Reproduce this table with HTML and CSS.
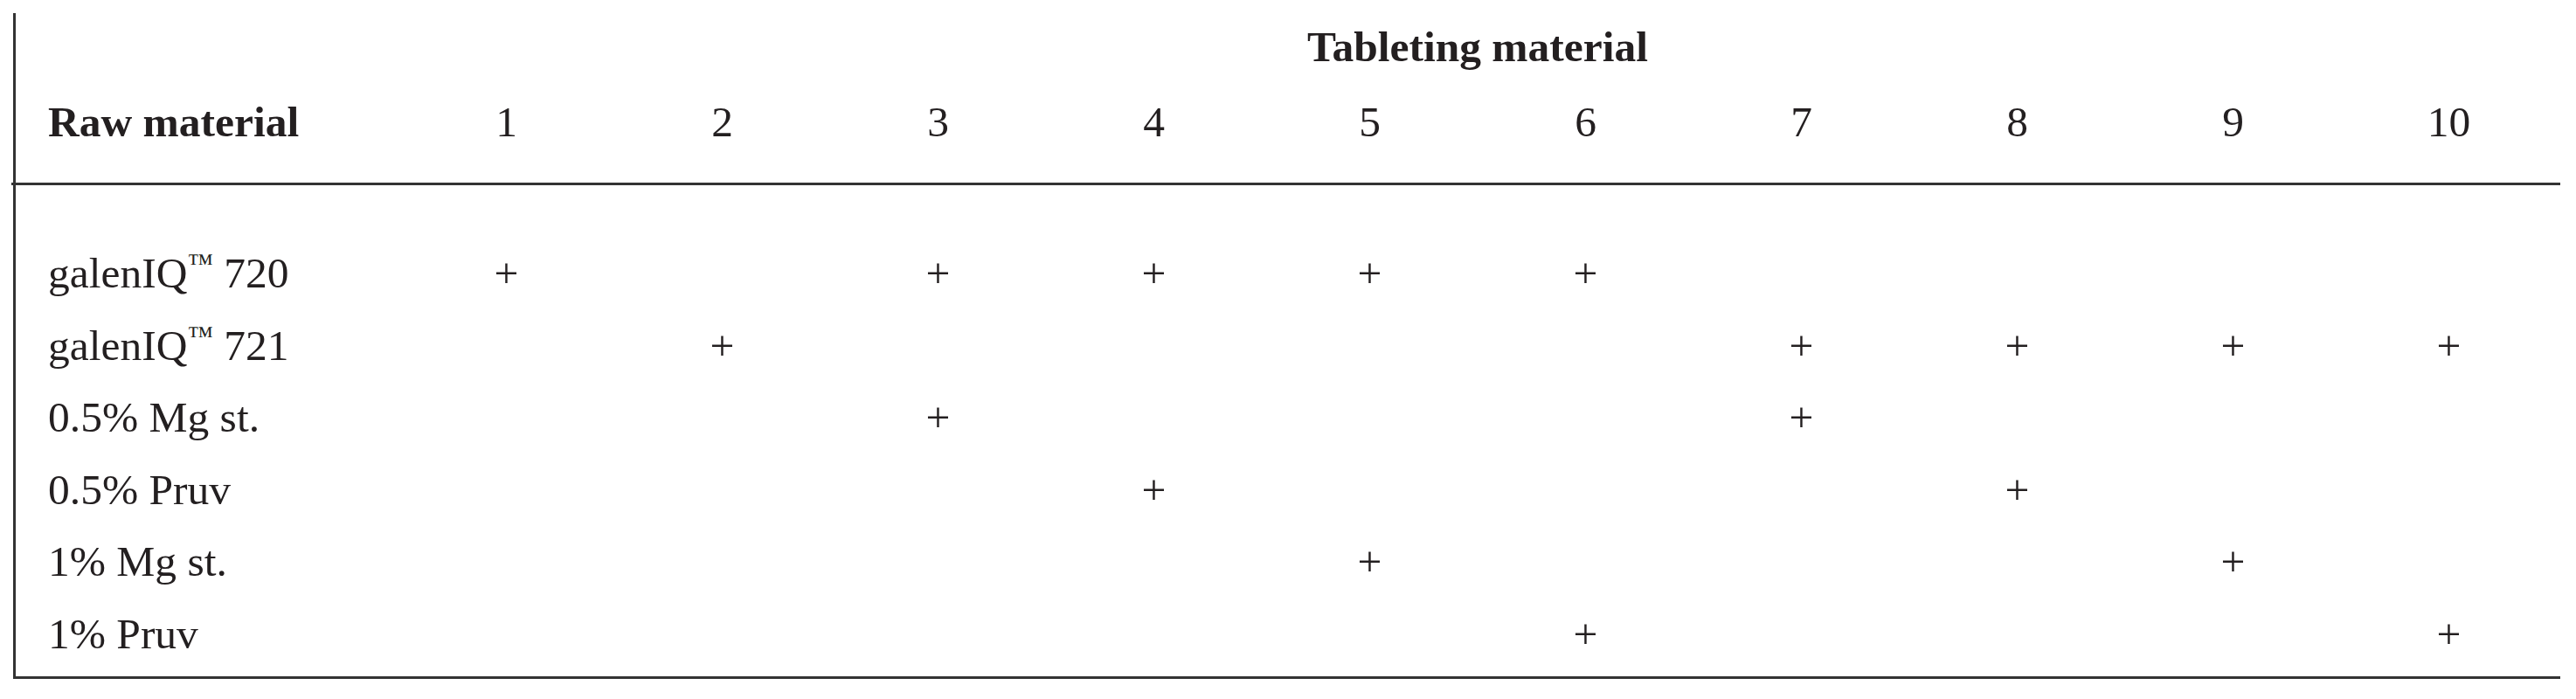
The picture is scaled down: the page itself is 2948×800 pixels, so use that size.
FILE: index.html
```html
<!DOCTYPE html>
<html lang="en">
<head>
<meta charset="utf-8">
<title>Tableting material</title>
<link rel="stylesheet" href="styles.css">
</head>
<body>
<div class="frame">
  <div class="head">
    <div class="grid title-row">
      <div class="title">Tableting material</div>
    </div>
    <div class="grid num-row">
      <div class="label bold">Raw material</div>
      <div class="cell">1</div><div class="cell">2</div><div class="cell">3</div><div class="cell">4</div><div class="cell">5</div>
      <div class="cell">6</div><div class="cell">7</div><div class="cell">8</div><div class="cell">9</div><div class="cell">10</div>
    </div>
  </div>
  <div class="body">
    <div class="grid row">
      <div class="label">galenIQ<span class="tm">™</span> 720</div>
      <div class="cell">+</div><div class="cell"></div><div class="cell">+</div><div class="cell">+</div><div class="cell">+</div>
      <div class="cell">+</div><div class="cell"></div><div class="cell"></div><div class="cell"></div><div class="cell"></div>
    </div>
    <div class="grid row">
      <div class="label">galenIQ<span class="tm">™</span> 721</div>
      <div class="cell"></div><div class="cell">+</div><div class="cell"></div><div class="cell"></div><div class="cell"></div>
      <div class="cell"></div><div class="cell">+</div><div class="cell">+</div><div class="cell">+</div><div class="cell">+</div>
    </div>
    <div class="grid row">
      <div class="label">0.5% Mg st.</div>
      <div class="cell"></div><div class="cell"></div><div class="cell">+</div><div class="cell"></div><div class="cell"></div>
      <div class="cell"></div><div class="cell">+</div><div class="cell"></div><div class="cell"></div><div class="cell"></div>
    </div>
    <div class="grid row">
      <div class="label">0.5% Pruv</div>
      <div class="cell"></div><div class="cell"></div><div class="cell"></div><div class="cell">+</div><div class="cell"></div>
      <div class="cell"></div><div class="cell"></div><div class="cell">+</div><div class="cell"></div><div class="cell"></div>
    </div>
    <div class="grid row">
      <div class="label">1% Mg st.</div>
      <div class="cell"></div><div class="cell"></div><div class="cell"></div><div class="cell"></div><div class="cell">+</div>
      <div class="cell"></div><div class="cell"></div><div class="cell"></div><div class="cell">+</div><div class="cell"></div>
    </div>
    <div class="grid row">
      <div class="label">1% Pruv</div>
      <div class="cell"></div><div class="cell"></div><div class="cell"></div><div class="cell"></div><div class="cell"></div>
      <div class="cell">+</div><div class="cell"></div><div class="cell"></div><div class="cell"></div><div class="cell">+</div>
    </div>
  </div>
</div>
</body>
</html>
```

FILE: styles.css
```css
html, body {
  margin: 0;
  padding: 0;
  background: #ffffff;
}

body {
  font-family: "Liberation Serif", "Times New Roman", serif;
  font-size: 49.5px;
  color: #231f20;
}

.frame {
  margin: 15px 0 0 15px;
  width: 2912px;
  border-left: 3px solid #333333;
  border-bottom: 3px solid #333333;
}

.head {
  margin-left: -5px;
  padding: 9px 0 39px 5px;
  border-bottom: 3px solid #333333;
}

.grid {
  display: grid;
  grid-template-columns: 438px repeat(10, 247px);
}

.title-row {
  line-height: 60px;
}

.title {
  grid-column: 2 / span 10;
  text-align: center;
  font-weight: bold;
}

.num-row {
  margin-top: 26px;
  line-height: 60px;
}

.body {
  padding: 60px 0 7px;
}

.row {
  line-height: 82.5px;
}

.label {
  padding-left: 37px;
  text-align: left;
  white-space: nowrap;
}

.bold {
  font-weight: bold;
}

.cell {
  text-align: center;
}

.tm {
  font-size: 30px;
  line-height: 1;
  vertical-align: 18px;
}
```
